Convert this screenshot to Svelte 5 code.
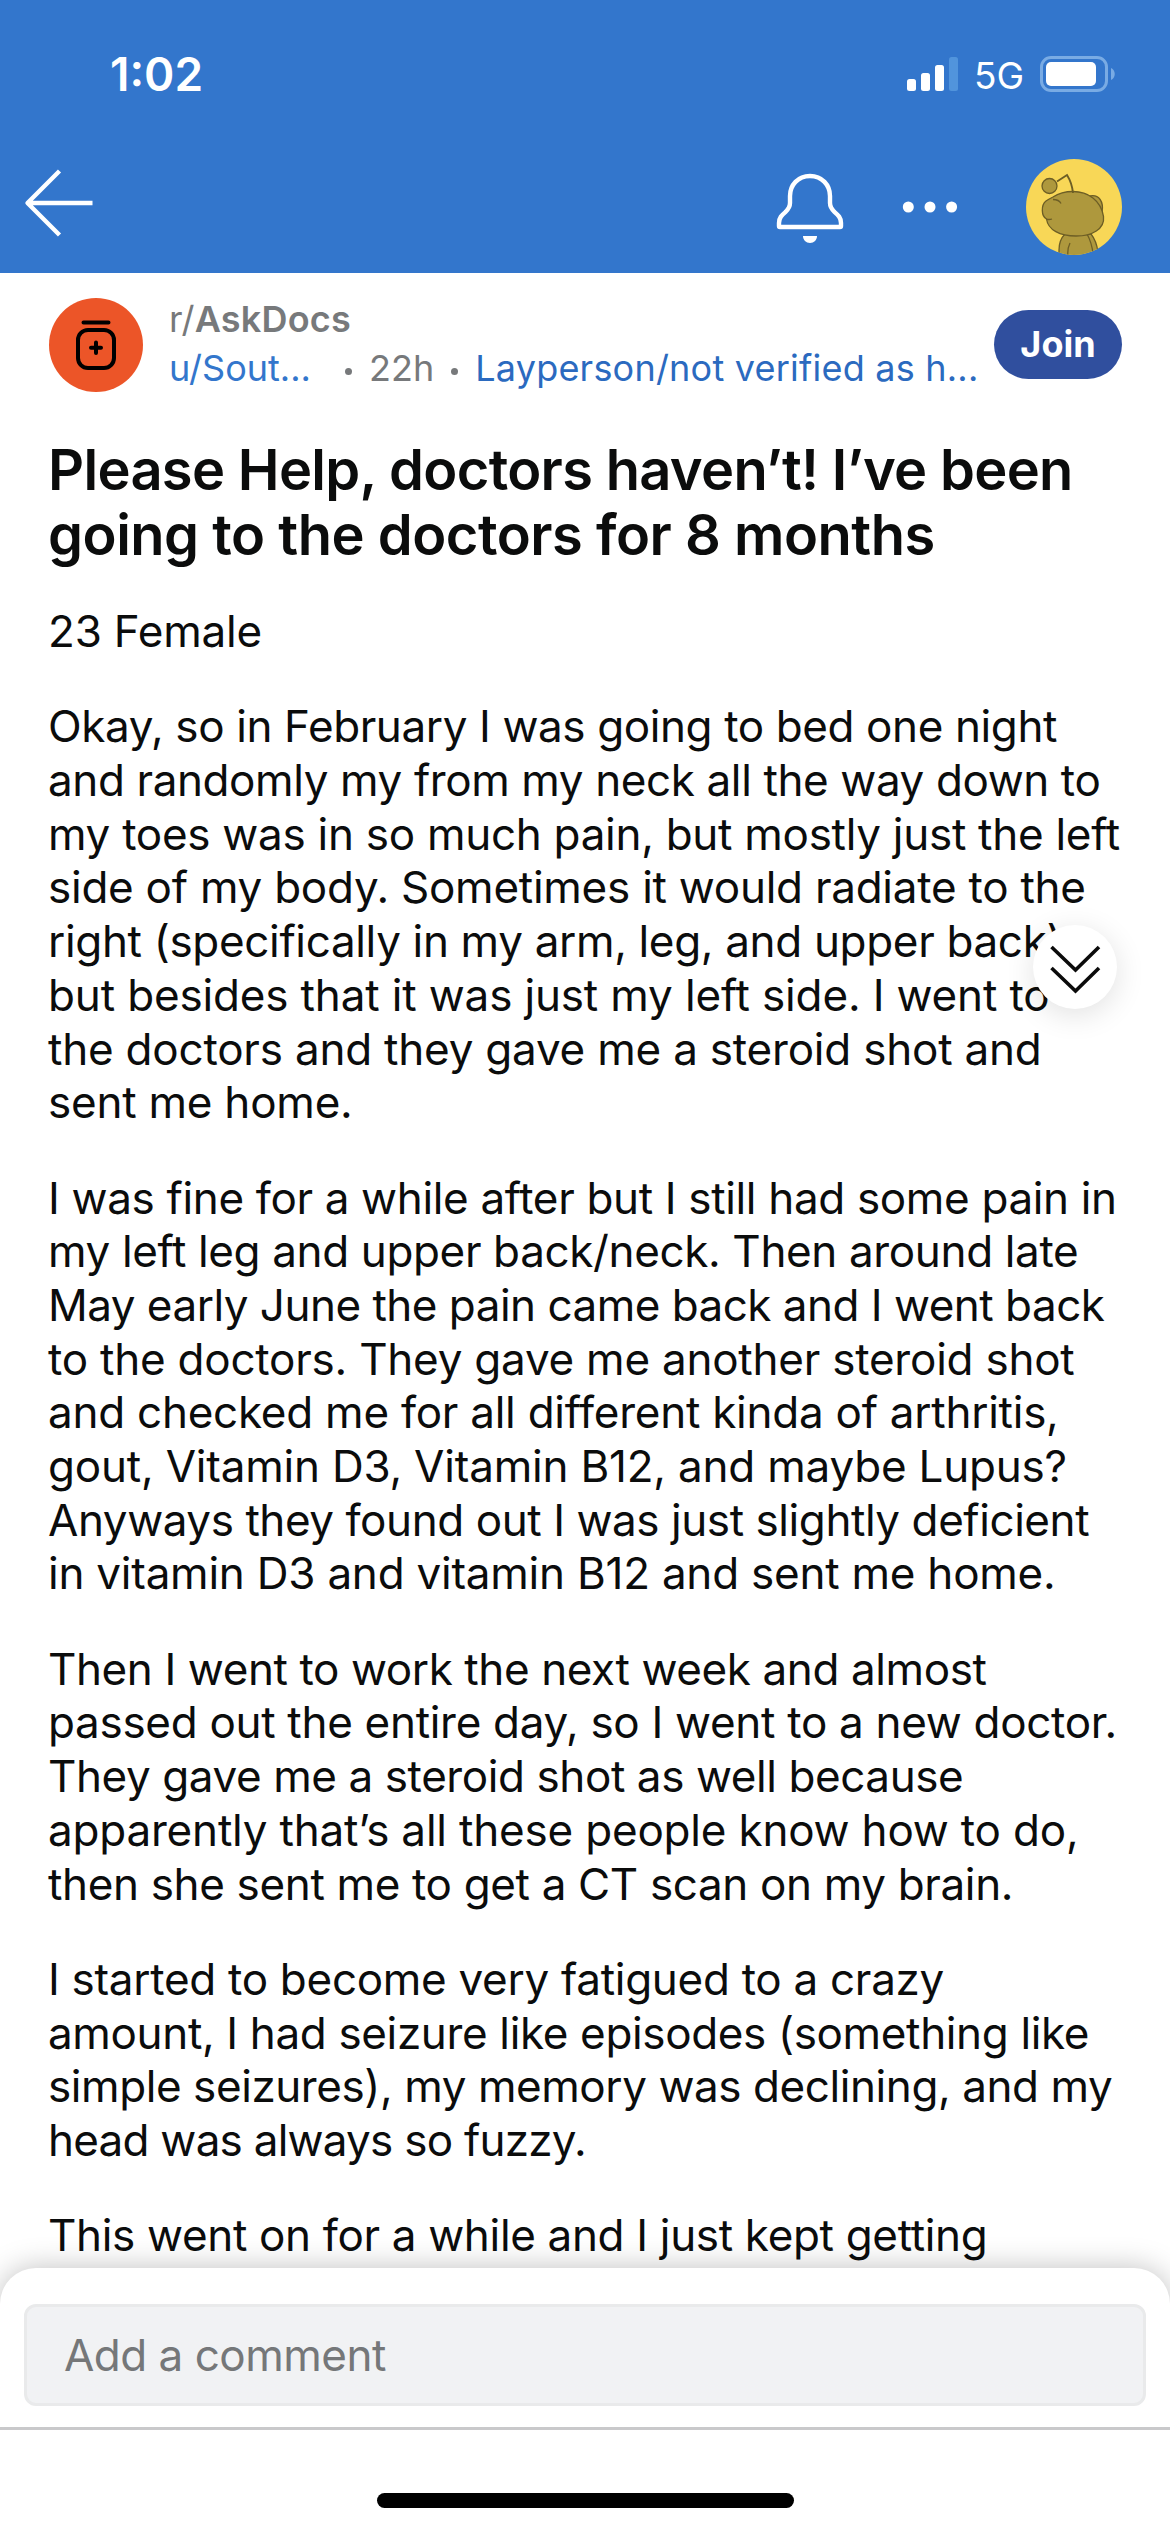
<script>
  const paragraphs = [
    [['23 Female', -0.2]],
    [
      ['Okay, so in February I was going to bed one night', -0.39],
      ['and randomly my from my neck all the way down to', -0.39],
      ['my toes was in so much pain, but mostly just the left', -0.28],
      ['side of my body. Sometimes it would radiate to the', -0.25],
      ['right (specifically in my arm, leg, and upper back)', -0.33],
      ['but besides that it was just my left side. I went to', -0.15],
      ['the doctors and they gave me a steroid shot and', -0.21],
      ['sent me home.', -0.23]
    ],
    [
      ['I was fine for a while after but I still had some pain in', -0.34],
      ['my left leg and upper back/neck. Then around late', -0.36],
      ['May early June the pain came back and I went back', -0.51],
      ['to the doctors. They gave me another steroid shot', -0.23],
      ['and checked me for all different kinda of arthritis,', -0.25],
      ['gout, Vitamin D3, Vitamin B12, and maybe Lupus?', -0.2],
      ['Anyways they found out I was just slightly deficient', -0.43],
      ['in vitamin D3 and vitamin B12 and sent me home.', -0.23]
    ],
    [
      ['Then I went to work the next week and almost', -0.4],
      ['passed out the entire day, so I went to a new doctor.', -0.3],
      ['They gave me a steroid shot as well because', -0.41],
      ['apparently that’s all these people know how to do,', -0.19],
      ['then she sent me to get a CT scan on my brain.', -0.35]
    ],
    [
      ['I started to become very fatigued to a crazy', -0.29],
      ['amount, I had seizure like episodes (something like', -0.35],
      ['simple seizures), my memory was declining, and my', -0.42],
      ['head was always so fuzzy.', -0.75]
    ],
    [['This went on for a while and I just kept getting', -0.33]]
  ];
</script>

<div class="screen">
  <header>
    <div class="status">
      <span class="time">1:02</span>
      <div class="indicators">
        <svg class="signal" width="52" height="36" viewBox="0 0 52 36" fill="#fff">
          <rect x="0" y="23" width="9" height="12" rx="2.5" />
          <rect x="14" y="17" width="9" height="18" rx="2.5" />
          <rect x="28" y="9" width="9" height="26" rx="2.5" />
          <rect x="42" y="1" width="9" height="34" rx="2.5" fill="#5194dc" />
        </svg>
        <span class="net">5G</span>
        <svg class="battery" width="76" height="38" viewBox="0 0 76 38">
          <rect x="1.5" y="2.5" width="65" height="33" rx="9.5" fill="none" stroke="#79abe4" stroke-width="3" />
          <rect x="6" y="7" width="50" height="24" rx="5" fill="#fff" />
          <path d="M71 13c5 2 5 10 0 12z" fill="#79abe4" />
        </svg>
      </div>
    </div>
    <div class="nav">
      <svg width="72" height="72" viewBox="0 0 72 72" fill="none" stroke="#fff" stroke-width="4.4" stroke-linejoin="round">
        <path d="M37.500 4 5.500 36 37.500 68M6 36H70.500" />
      </svg>
      <div class="actions">
        <svg class="bell" width="68" height="72" viewBox="0 0 68 72">
          <path d="M34 4C22 4 14 13 14 24v7c0 4-1.500 6-4.500 9C6 43 3 45.500 3 51v3q0 1 1 1h60q1 0 1-1v-3c0-5.500-3-8-6.500-11-3-3-4.500-5-4.500-9v-7C54 13 46 4 34 4z" fill="none" stroke="#fff" stroke-width="4.4" />
          <path d="M27 64h14c0 4-3 7-7 7s-7-3-7-7z" fill="#fff" />
        </svg>
        <svg class="dots" width="56" height="12" viewBox="0 0 56 12" fill="#fff">
          <circle cx="6.300" cy="6" r="5.500" /><circle cx="28" cy="6" r="5.500" /><circle cx="49.600" cy="6" r="5.500" />
        </svg>
        <svg class="avatar" width="96" height="96" viewBox="0 0 96 96">
          <clipPath id="round"><circle cx="48" cy="48" r="48" /></clipPath>
          <circle cx="48" cy="48" r="48" fill="#f8d757" />
          <g clip-path="url(#round)" fill="#ae983d" stroke="#6d5e25" stroke-width="1.300">
            <path d="M33 97v-6c0-6 2-12 6-16h26c4 5 6 11 7 18v4z" />
            <path d="M44 84q-3 6-2 14M61 75q5 9 6 20" fill="none" />
            <path d="M64 37c9-2 14 6 12 16z" />
            <path d="M27 38c6-4 14-5.500 20-5.500 15 0 28 9 30.500 25C79 70 66 77 50 77 34 77 22 71 20.500 60 15 57 15 46 20 42q3-2 7-4z" />
            <path d="M20 60q3 1 6 0M27 40.500q6 0 8 4" fill="none" />
            <circle cx="23.500" cy="27" r="7.500" />
            <path d="M31 22.500 41 16q5 8 6 18" fill="none" stroke-width="1.900" />
          </g>
        </svg>
      </div>
    </div>
  </header>

  <main>
    <div class="byline">
      <svg class="sub" width="94" height="94" viewBox="0 0 94 94">
        <circle cx="47" cy="47" r="47" fill="#ec5528" />
        <g fill="none" stroke="#000" stroke-width="4" stroke-linecap="round">
          <path d="M34.500 24.500h25M47 44.500v10.500M42 49.800h10" />
          <rect x="29" y="32" width="36" height="38" rx="10" />
        </g>
      </svg>
      <div class="meta">
        <div class="community">r/<b>AskDocs</b></div>
        <div class="info">
          <span class="user">u/Sout...</span>
          <i></i>
          <span class="age">22h</span>
          <i></i>
          <span class="flair">Layperson/not verified as h...</span>
        </div>
      </div>
      <button>Join</button>
    </div>

    <h1><span class="t1">Please Help, doctors haven’t! I’ve been</span><span class="t2">going to the doctors for 8 months</span></h1>

    <article>
      {#each paragraphs as lines}
        <p>
          {#each lines as [text, tracking]}
            <span style="letter-spacing: {tracking}px">{text}</span>
          {/each}
        </p>
      {/each}
    </article>
  </main>

  <div class="jump">
    <svg width="84" height="84" viewBox="0 0 84 84" fill="none" stroke="#0b0b0b" stroke-width="3.600">
      <path d="M18.500 22 42.500 45 66 22M18.500 43 42.500 66 66 43" />
    </svg>
  </div>

  <footer>
    <div class="field">Add a comment</div>
    <div class="home"><div class="bar"></div></div>
  </footer>
</div>

<style>
  .screen {
    position: relative;
    width: 1170px;
    height: 2532px;
    overflow: hidden;
    display: flex;
    flex-direction: column;
    background: #fff;
    color: #0b0c0c;
    font-family: Inter, 'Liberation Sans', sans-serif;
    white-space: nowrap;
  }
  header {
    flex: none;
    height: 273px;
    background: #3376cc;
    color: #fff;
  }
  .status {
    height: 150px;
    display: flex;
    justify-content: space-between;
    padding: 0 54px 0 110px;
  }
  .time {
    font-size: 46px;
    font-weight: 600;
    line-height: 56px;
    padding-top: 46px;
  }
  .indicators {
    display: flex;
    align-items: flex-start;
    padding-top: 55px;
  }
  .signal { margin: 1px 15px 0 0; }
  .net {
    width: 66px;
    font-size: 37px;
    line-height: 42px;
  }
  .nav {
    display: flex;
    justify-content: space-between;
    height: 114px;
    padding: 0 48px 0 22px;
  }
  .nav > svg { margin-top: 17px; }
  .actions {
    display: flex;
    align-items: center;
  }
  .bell { margin-top: 2px; }
  .dots { margin: 0 68px 0 58px; }
  main {
    flex: 1;
    min-height: 0;
    padding: 25px 48px 0;
  }
  .byline {
    display: flex;
    height: 94px;
  }
  .sub { margin-left: 1px; }
  .meta {
    width: 825px;
    margin-left: 26px;
    font-size: 36px;
    line-height: 49px;
    color: #77797b;
  }
  .community {
    margin-top: -3px;
    letter-spacing: 0.2px;
  }
  .community b { font-weight: 600; }
  .info {
    display: flex;
    align-items: center;
  }
  .info i {
    width: 7px;
    height: 7px;
    margin: 5px 17px 0;
    border-radius: 50%;
    background: #77797b;
  }
  .user { width: 159px; color: #3376cc; }
  .flair {
    color: #2b6abf;
    letter-spacing: 0.22px;
  }
  button {
    width: 128px;
    height: 69px;
    margin-top: 12px;
    padding: 0;
    border: 0;
    border-radius: 35px;
    background: #304f9e;
    color: #fff;
    font: 700 36px/69px Inter, sans-serif;
  }
  h1 {
    margin: 46px 0 0;
    font-size: 56px;
    font-weight: 600;
    line-height: 64.5px;
  }
  .t1 { letter-spacing: -0.68px; }
  .t2 { letter-spacing: -0.48px; }
  h1 span,
  p span {
    display: block;
    width: max-content;
  }
  article {
    padding-top: 38px;
    font-size: 44px;
    line-height: 53.7px;
  }
  p { margin: 0 0 41.6px; }
  .jump {
    position: absolute;
    left: 1033px;
    top: 925px;
    width: 84px;
    height: 84px;
    border-radius: 50%;
    background: #fff;
    box-shadow: 0 6px 30px rgba(0, 0, 0, 0.12);
  }
  footer {
    position: relative;
    flex: none;
    height: 264px;
    box-sizing: border-box;
    padding-top: 36px;
    border-radius: 36px 36px 0 0;
    background: #fff;
    box-shadow: 0 0 30px rgba(0, 0, 0, 0.25);
  }
  .field {
    height: 102px;
    box-sizing: border-box;
    margin: 0 24px 21px;
    padding-left: 37px;
    border: 3px solid #e9eaeb;
    border-radius: 12px;
    background: #f1f2f4;
    color: #757779;
    font-size: 44px;
    line-height: 96px;
    letter-spacing: -0.5px;
  }
  .home {
    border-top: 3px solid #c9c9cb;
    padding-top: 63px;
  }
  .bar {
    width: 417px;
    height: 15px;
    margin: 0 auto;
    border-radius: 8px;
    background: #000;
  }
</style>
